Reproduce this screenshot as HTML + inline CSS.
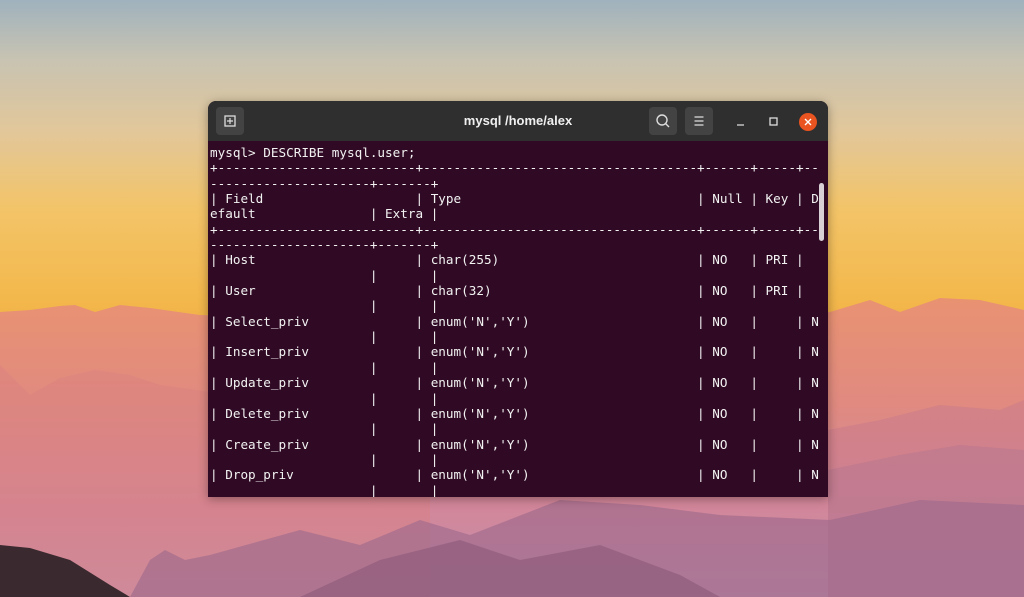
<!DOCTYPE html>
<html><head><meta charset="utf-8"><style>
html,body{margin:0;padding:0;width:1024px;height:597px;overflow:hidden}
body{position:relative;background:linear-gradient(180deg,#9fb2bd 0%,#c8c3b2 10%,#e2c79a 22%,#f3c468 35%,#f3b84c 50%,#f0b048 55%)}
svg.bg{position:absolute;left:0;top:0}
.win{position:absolute;left:208px;top:101px;width:620px;height:396px;background:#300a24;border-radius:8px 8px 0 0;overflow:hidden;box-shadow:0 2px 10px rgba(0,0,0,.35)}
.tb{position:absolute;left:0;top:0;width:620px;height:40px;background:#2f2f2f}
.btn{position:absolute;top:6px;width:28px;height:28px;background:#434343;border-radius:4px}
.title{position:absolute;left:0;width:620px;top:12px;text-align:center;color:#f0f0f0;font:bold 13px "Liberation Sans",sans-serif}
pre{position:absolute;left:2px;top:44px;margin:0;color:#f2f2f2;font:12.65px/15.35px "DejaVu Sans Mono","Liberation Mono",monospace;white-space:pre}
.sb{position:absolute;left:611px;top:82px;width:5px;height:58px;background:#d8d0d4;border-radius:3px}
</style></head><body>
<svg class="bg" width="1024" height="597">
<defs><linearGradient id="m" x1="0" y1="0" x2="0" y2="1"><stop offset="0" stop-color="#e99272"/><stop offset=".35" stop-color="#e08a80"/><stop offset=".7" stop-color="#d2869a"/><stop offset="1" stop-color="#c592ae"/></linearGradient></defs>
<path d="M0 312 L30 310 L60 306 L75 305 L95 312 L120 305 L150 308 L200 315 L300 318 L500 320 L700 318 L830 312 L870 300 L900 312 L940 298 L980 300 L1024 310 L1024 597 L0 597Z" fill="url(#m)"/>
<path d="M0 365 L30 395 L60 378 L95 370 L130 375 L160 385 L210 392 L300 410 L430 440 L430 597 L0 597Z" fill="#d98080" opacity=".45"/>
<path d="M828 430 L880 420 L940 405 L1000 410 L1024 400 L1024 597 L828 597Z" fill="#c77a8c" opacity=".5"/>
<path d="M828 470 L900 455 L960 445 L1024 450 L1024 597 L828 597Z" fill="#b67590" opacity=".5"/>
<path d="M130 597 L150 560 L165 550 L185 560 L210 555 L300 530 L360 545 L420 520 L470 535 L560 500 L640 505 L720 515 L830 520 L920 500 L1024 505 L1024 597Z" fill="#9e6a8c" opacity=".65"/>
<path d="M300 597 L380 560 L460 540 L520 560 L600 545 L680 575 L720 597Z" fill="#8a5878" opacity=".6"/>
<path d="M0 545 L30 548 L70 560 L110 585 L130 597 L0 597Z" fill="#3a2a30"/>
</svg>
<div class="win">
<div class="tb">
<div class="btn" style="left:8px"><svg width="28" height="28"><rect x="9" y="9" width="10" height="10" fill="none" stroke="#ddd" stroke-width="1.3"/><path d="M14 11v6M11 14h6" stroke="#ddd" stroke-width="1.2"/></svg></div>
<div class="title">mysql /home/alex</div>
<div class="btn" style="left:441px"><svg width="28" height="28"><circle cx="13" cy="13" r="5" fill="none" stroke="#ddd" stroke-width="1.4"/><path d="M16.5 16.5l3.5 3.5" stroke="#ddd" stroke-width="1.4"/></svg></div>
<div class="btn" style="left:477px"><svg width="28" height="28"><path d="M9.5 10h9M9.5 14h9M9.5 18h9" stroke="#ddd" stroke-width="1.3"/></svg></div>
<svg style="position:absolute;left:520px;top:10px" width="100" height="22"><path d="M9 14h7" stroke="#ddd" stroke-width="1.3"/><rect x="42" y="7" width="7" height="7" fill="none" stroke="#ddd" stroke-width="1.3"/><circle cx="80" cy="11" r="9" fill="#e95420"/><path d="M77 8l6 6M83 8l-6 6" stroke="#fff" stroke-width="1.4"/></svg>
</div>
<pre>mysql&gt; DESCRIBE mysql.user;
+--------------------------+------------------------------------+------+-----+--
---------------------+-------+
| Field                    | Type                               | Null | Key | D
efault               | Extra |
+--------------------------+------------------------------------+------+-----+--
---------------------+-------+
| Host                     | char(255)                          | NO   | PRI |
                     |       |
| User                     | char(32)                           | NO   | PRI |
                     |       |
| Select_priv              | enum('N','Y')                      | NO   |     | N
                     |       |
| Insert_priv              | enum('N','Y')                      | NO   |     | N
                     |       |
| Update_priv              | enum('N','Y')                      | NO   |     | N
                     |       |
| Delete_priv              | enum('N','Y')                      | NO   |     | N
                     |       |
| Create_priv              | enum('N','Y')                      | NO   |     | N
                     |       |
| Drop_priv                | enum('N','Y')                      | NO   |     | N
                     |       |</pre>
<div class="sb"></div>
</div>
</body></html>
